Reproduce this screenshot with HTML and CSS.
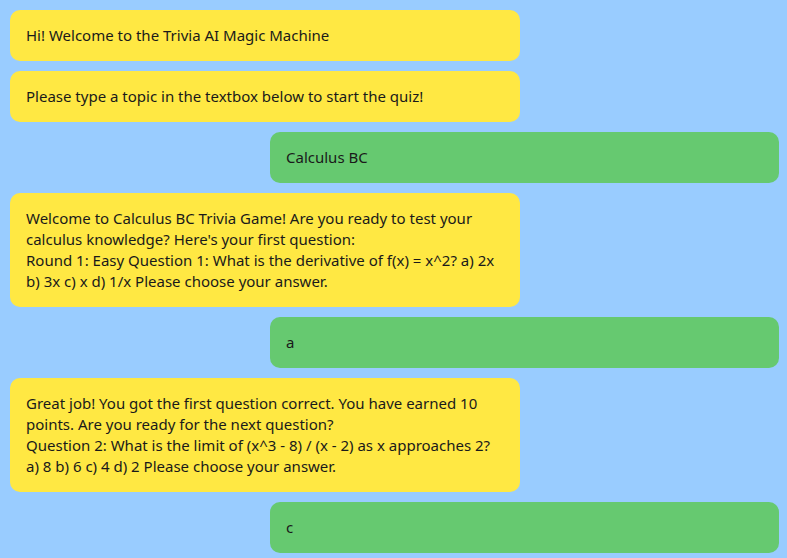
FILE: index.html
```html
<!DOCTYPE html>
<html>
<head>
<meta charset="utf-8">
<link rel="stylesheet" href="styles.css">
</head>
<body>
<div class="chat">
  <div class="msg bot">Hi! Welcome to the Trivia AI Magic Machine</div>
  <div class="msg bot">Please type a topic in the textbox below to start the quiz!</div>
  <div class="msg user">Calculus BC</div>
  <div class="msg bot">Welcome to Calculus BC Trivia Game! Are you ready to test your calculus knowledge? Here's your first question:<br>Round 1: Easy Question 1: What is the derivative of f(x) = x^2? a) 2x b) 3x c) x d) 1/x Please choose your answer.</div>
  <div class="msg user">a</div>
  <div class="msg bot">Great job! You got the first question correct. You have earned 10 points. Are you ready for the next question?<br>Question 2: What is the limit of (x^3 - 8) / (x - 2) as x approaches 2? a) 8 b) 6 c) 4 d) 2 Please choose your answer.</div>
  <div class="msg user">c</div>
</div>
</body>
</html>
```
FILE: styles.css
```css
html, body {
  margin: 0;
  padding: 0;
  background: #99ccff;
}
body {
  font-family: "Noto Sans", "Open Sans", sans-serif;
  font-size: 15px;
  line-height: 21px;
  color: #1a1a1a;
}
.chat {
  display: flex;
  flex-direction: column;
  gap: 10px;
  padding: 10px 8px 10px 10px;
}
.msg {
  width: 510px;
  box-sizing: border-box;
  padding: 15px 16px;
  border-radius: 10px;
}
.bot {
  background: #ffe843;
  align-self: flex-start;
}
.user {
  background: #66c970;
  align-self: flex-end;
  width: 509px;
}
```
